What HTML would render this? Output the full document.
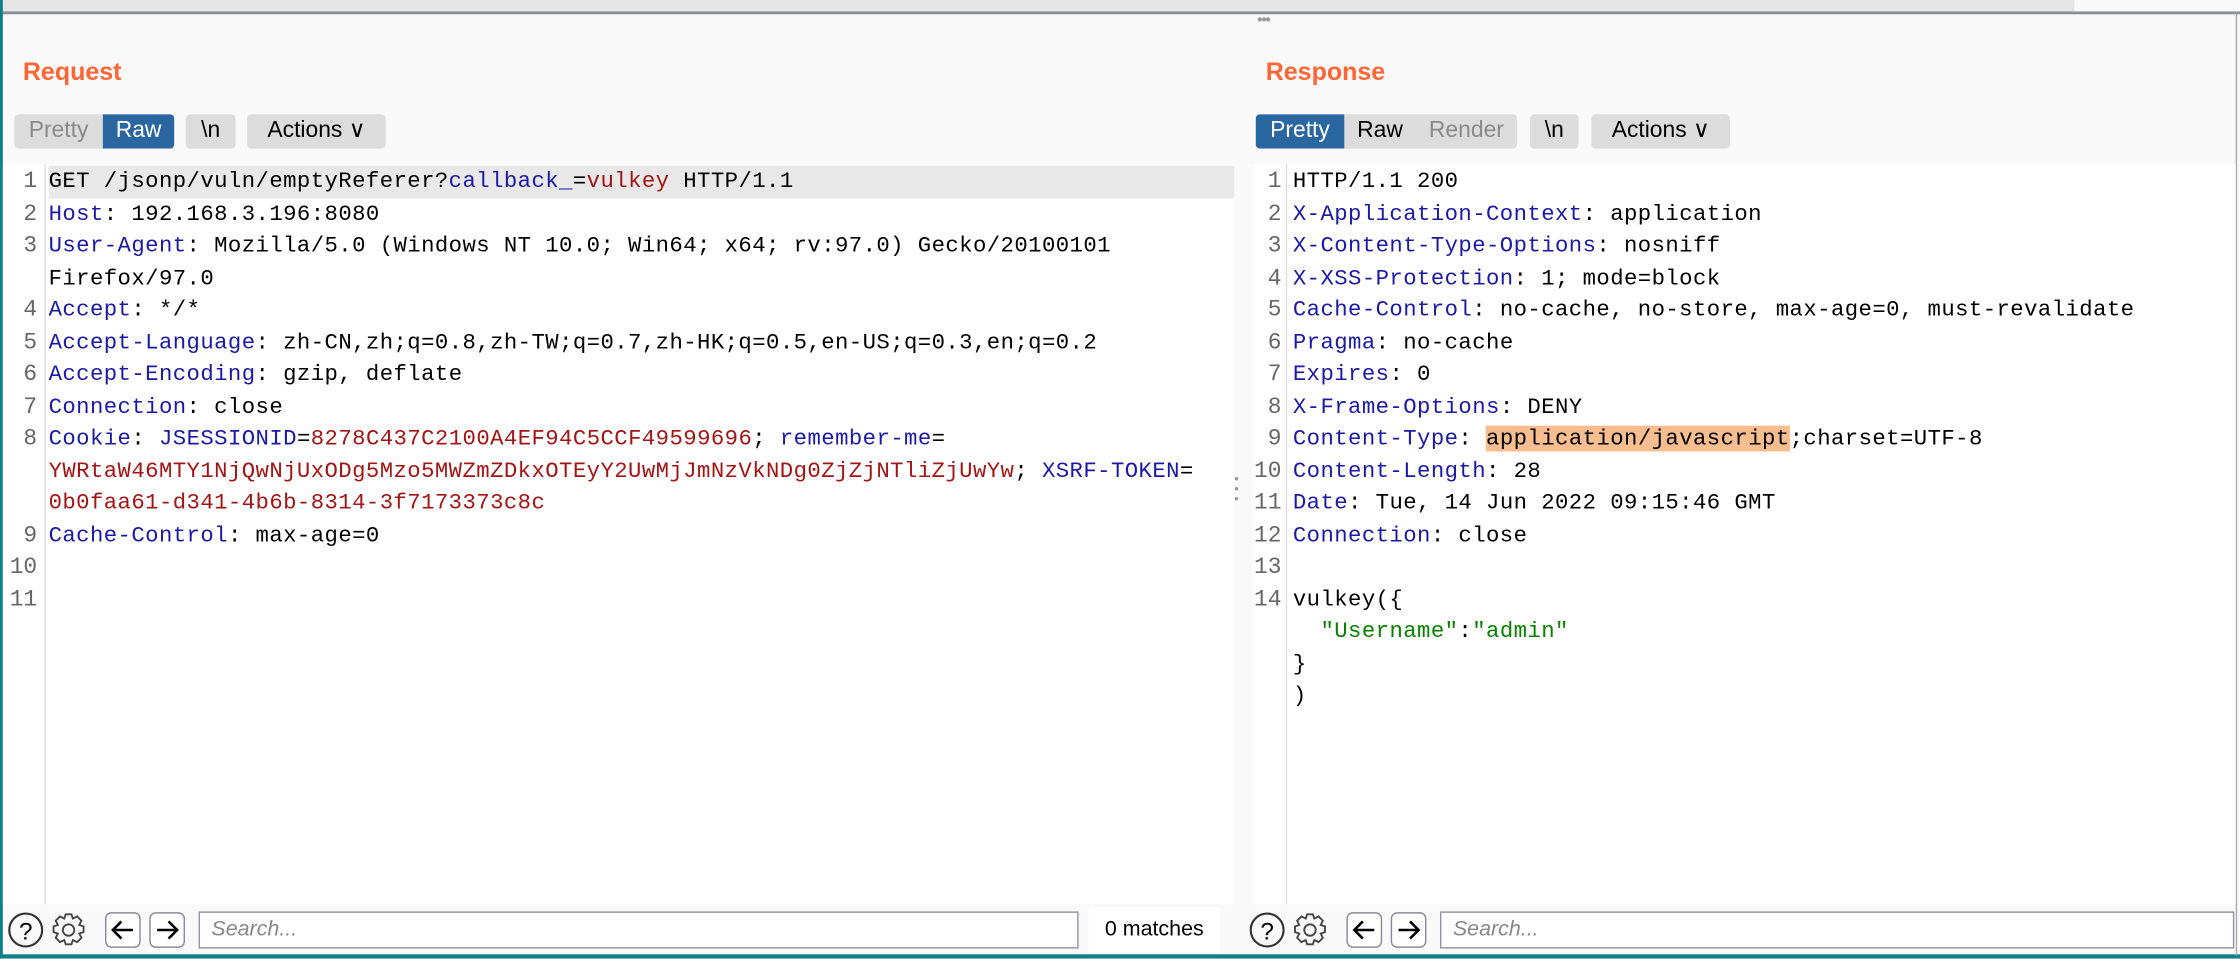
<!DOCTYPE html>
<html><head><meta charset="utf-8"><style>
html,body{margin:0;padding:0;width:2240px;height:958px;overflow:hidden;background:#fff}
#w{position:absolute;left:0;top:0;width:1568px;height:671px;transform:scale(1.428571);transform-origin:0 0;background:#f9f9f9;font-family:"Liberation Sans",sans-serif}
.top{position:absolute;left:0;top:0;width:1452px;height:8px;background:#e5e5e5}
.topline{position:absolute;left:0;top:8px;width:1568px;height:1.5px;background:#8d8d9a}
.title{position:absolute;top:40px;font-size:17.5px;font-weight:bold;color:#ff6633}
.btns{position:absolute;top:80px;height:24px}
.grp{position:absolute;top:0;height:24px;display:flex;background:#dcdcdc;border-radius:3px;overflow:hidden}
.grp span{display:block;text-align:center;line-height:24px;font-size:16px;color:#000}
.grp .dis{color:#8a8a8a}
.grp .on{background:#2a66a0;color:#fff}
.code{position:absolute;top:115px;height:518px;background:#fff}
.gut{position:absolute;left:0;top:0;bottom:0;border-right:1px solid #ddd}
.ln{position:absolute;left:0;top:1px;font-family:"Liberation Mono",monospace;font-size:16px;line-height:22.5px;color:#666;text-align:right}
.tx{position:absolute;top:1px;font-family:"Liberation Mono","Noto Serif CJK SC",monospace;font-size:15.6px;line-height:22.5px;color:#000;white-space:pre;letter-spacing:0.3px}
.k{color:#1a1aa6}.r{color:#a31515}.g{color:#0a8000}
.hl{background:#e8e8e8;display:inline-block;width:830px}
.bot{position:absolute;top:635px;height:32px}
.ic{position:absolute;top:3px;width:26px;height:26px}
.sb{position:absolute;top:3px;height:26px;border:1.5px solid #9595a3;background:#fff;box-sizing:border-box;font-style:italic;color:#888;font-size:15px;line-height:23px;padding-left:8px}
</style></head><body><div id="w">
<div class="top"></div><div class="topline"></div>
<div style="position:absolute;left:0;top:0;width:2px;height:671px;background:#12808a"></div>
<div style="position:absolute;left:0;top:668px;width:1568px;height:3px;background:#12808a"></div>
<div style="position:absolute;left:1565px;top:9px;width:1px;height:660px;background:#aaa"></div>
<div style="position:absolute;left:880px;top:8px;font-size:11px;color:#999;letter-spacing:-1px">•••</div>
<div style="position:absolute;left:864px;top:332px;font-size:9px;color:#999;line-height:7px;width:6px">•<br>•<br>•</div>

<div class="title" style="left:16px">Request</div>
<div class="title" style="left:886px">Response</div>

<div class="btns" style="left:0">
<div class="grp" style="left:10px"><span class="dis" style="width:62px">Pretty</span><span class="on" style="width:50px">Raw</span></div>
<div class="grp" style="left:130px"><span style="width:35px">\n</span></div>
<div class="grp" style="left:173px"><span style="width:97px">Actions &#x2228;</span></div>
</div>
<div class="btns" style="left:0">
<div class="grp" style="left:879px"><span class="on" style="width:62px">Pretty</span><span style="width:50px">Raw</span><span class="dis" style="width:71px">Render</span></div>
<div class="grp" style="left:1071px"><span style="width:34px">\n</span></div>
<div class="grp" style="left:1114px"><span style="width:97px">Actions &#x2228;</span></div>
</div>

<div class="code" style="left:2px;width:862px">
<div class="gut" style="width:29px"></div>
<div class="ln" style="width:24px">1<br>2<br>3<br><br>4<br>5<br>6<br>7<br>8<br><br><br>9<br>10<br>11</div>
<div class="tx" style="left:32px"><span class="hl">GET /jsonp/vuln/emptyReferer?<span class="k">callback_</span>=<span class="r">vulkey</span> HTTP/1.1</span>
<span class="k">Host</span>: 192.168.3.196:8080
<span class="k">User-Agent</span>: Mozilla/5.0 (Windows NT 10.0; Win64; x64; rv:97.0) Gecko/20100101
Firefox/97.0
<span class="k">Accept</span>: */*
<span class="k">Accept-Language</span>: zh-CN,zh;q=0.8,zh-TW;q=0.7,zh-HK;q=0.5,en-US;q=0.3,en;q=0.2
<span class="k">Accept-Encoding</span>: gzip, deflate
<span class="k">Connection</span>: close
<span class="k">Cookie</span>: <span class="k">JSESSIONID</span>=<span class="r">8278C437C2100A4EF94C5CCF49599696</span>; <span class="k">remember-me</span>=
<span class="r">YWRtaW46MTY1NjQwNjUxODg5Mzo5MWZmZDkxOTEyY2UwMjJmNzVkNDg0ZjZjNTliZjUwYw</span>; <span class="k">XSRF-TOKEN</span>=
<span class="r">0b0faa61-d341-4b6b-8314-3f7173373c8c</span>
<span class="k">Cache-Control</span>: max-age=0</div>
</div>

<div class="code" style="left:877px;width:688px">
<div class="gut" style="width:23px"></div>
<div class="ln" style="width:20px">1<br>2<br>3<br>4<br>5<br>6<br>7<br>8<br>9<br>10<br>11<br>12<br>13<br>14</div>
<div class="tx" style="left:28px">HTTP/1.1 200
<span class="k">X-Application-Context</span>: application
<span class="k">X-Content-Type-Options</span>: nosniff
<span class="k">X-XSS-Protection</span>: 1; mode=block
<span class="k">Cache-Control</span>: no-cache, no-store, max-age=0, must-revalidate
<span class="k">Pragma</span>: no-cache
<span class="k">Expires</span>: 0
<span class="k">X-Frame-Options</span>: DENY
<span class="k">Content-Type</span>: <span style="background:#f9be8f">application/javascript</span>;charset=UTF-8
<span class="k">Content-Length</span>: 28
<span class="k">Date</span>: Tue, 14 Jun 2022 09:15:46 GMT
<span class="k">Connection</span>: close

vulkey({
  <span class="g">"Username"</span>:<span class="g">"admin"</span>
}
)</div>
</div>

<div class="bot" style="left:2px;width:862px">
<svg class="ic" style="left:3px" viewBox="0 0 26 26"><circle cx="13" cy="13" r="11.5" fill="none" stroke="#333" stroke-width="1.5"/><text x="13" y="19.5" font-size="17" text-anchor="middle" font-family="Liberation Sans">?</text></svg>
<svg class="ic" style="left:33px" viewBox="0 0 26 26"><path d="M11 2h4l1 3 3 -1.5 3 3 -1.5 3 3 1v4l-3 1 1.5 3-3 3-3-1.5-1 3h-4l-1-3-3 1.5-3-3 1.5-3-3-1v-4l3-1-1.5-3 3-3 3 1.5z" fill="none" stroke="#444" stroke-width="1.3"/><circle cx="13" cy="13" r="4" fill="none" stroke="#444" stroke-width="1.3"/></svg>
<svg class="ic" style="left:71px" viewBox="0 0 26 26"><rect x="1" y="1" width="24" height="24" rx="4" fill="#fff" stroke="#8a8a9a"/><path d="M20 13H6M12 7l-6 6 6 6" fill="none" stroke="#000" stroke-width="1.8"/></svg>
<svg class="ic" style="left:102px" viewBox="0 0 26 26"><rect x="1" y="1" width="24" height="24" rx="4" fill="#fff" stroke="#8a8a9a"/><path d="M6 13h14M14 7l6 6-6 6" fill="none" stroke="#000" stroke-width="1.8"/></svg>
<div class="sb" style="left:137px;width:616px">Search...</div>
<div style="position:absolute;left:760px;top:0;width:92px;height:32px;background:#fff;font-size:15px;line-height:32px;text-align:center">0 matches</div>
</div>
<div class="bot" style="left:871px;width:694px">
<svg class="ic" style="left:3px" viewBox="0 0 26 26"><circle cx="13" cy="13" r="11.5" fill="none" stroke="#333" stroke-width="1.5"/><text x="13" y="19.5" font-size="17" text-anchor="middle" font-family="Liberation Sans">?</text></svg>
<svg class="ic" style="left:33px" viewBox="0 0 26 26"><path d="M11 2h4l1 3 3 -1.5 3 3 -1.5 3 3 1v4l-3 1 1.5 3-3 3-3-1.5-1 3h-4l-1-3-3 1.5-3-3 1.5-3-3-1v-4l3-1-1.5-3 3-3 3 1.5z" fill="none" stroke="#444" stroke-width="1.3"/><circle cx="13" cy="13" r="4" fill="none" stroke="#444" stroke-width="1.3"/></svg>
<svg class="ic" style="left:71px" viewBox="0 0 26 26"><rect x="1" y="1" width="24" height="24" rx="4" fill="#fff" stroke="#8a8a9a"/><path d="M20 13H6M12 7l-6 6 6 6" fill="none" stroke="#000" stroke-width="1.8"/></svg>
<svg class="ic" style="left:102px" viewBox="0 0 26 26"><rect x="1" y="1" width="24" height="24" rx="4" fill="#fff" stroke="#8a8a9a"/><path d="M6 13h14M14 7l6 6-6 6" fill="none" stroke="#000" stroke-width="1.8"/></svg>
<div class="sb" style="left:137px;width:556px">Search...</div>
</div>
</div></body></html>
